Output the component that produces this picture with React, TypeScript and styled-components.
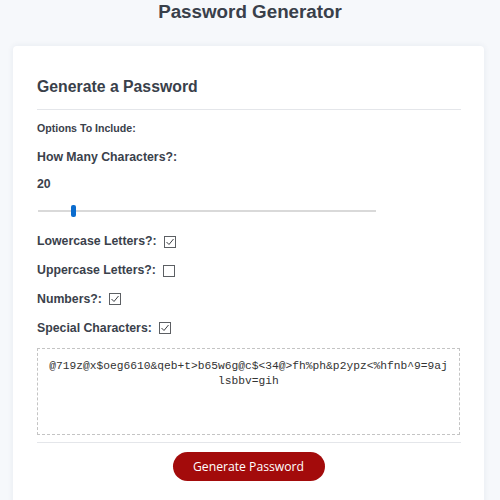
import React, { useState } from "react";
import styled, { createGlobalStyle } from "styled-components";

const GlobalStyle = createGlobalStyle`
  html, body { margin: 0; padding: 0; background: #f6f8fb; }
  body { font-family: "Liberation Sans", Arial, sans-serif; color: #3a414b; }
  * { box-sizing: border-box; }
`;

const Page = styled.div`
  width: 500px;
  min-height: 500px;
  overflow: hidden;
`;

const Title = styled.h1`
  margin: 0;
  height: 46px;
  padding-top: 0;
  font-size: 18.8px;
  line-height: 23px;
  font-weight: 700;
  text-align: center;
  color: #39404a;
`;

const Card = styled.section`
  margin-left: 13px;
  width: 471px;
  background: #fff;
  border-radius: 4px;
  box-shadow: 0 0 6px rgba(40, 60, 100, 0.08);
  padding: 0 23px 30px 24px;
`;

const CardHeader = styled.div`
  padding: 31px 0 13px;
  border-bottom: 1px solid #e4e6ea;
`;

const CardTitle = styled.h2`
  margin: 0;
  font-size: 15.8px;
  line-height: 19px;
  font-weight: 700;
  color: #39404a;
`;

const Body = styled.div`
  display: flex;
  flex-direction: column;
  padding-top: 12px;
`;

const Small = styled.div`
  font-size: 10.6px;
  line-height: 13px;
  font-weight: 700;
`;

const Label = styled.div<{ $mt: number }>`
  margin-top: ${(p) => p.$mt}px;
  font-size: 12.3px;
  line-height: 15px;
  font-weight: 700;
`;

const Range = styled.input`
  -webkit-appearance: none;
  appearance: none;
  margin: 10.5px 0 0 1px;
  width: 338px;
  height: 16px;
  background: transparent;
  &::-webkit-slider-runnable-track {
    height: 2px;
    background: #d9d9d9;
  }
  &::-webkit-slider-thumb {
    -webkit-appearance: none;
    width: 5px;
    height: 12px;
    margin-top: -5px;
    border-radius: 2px;
    background: #0b6cce;
  }
`;

const OptionRow = styled.label<{ $mt: number }>`
  display: flex;
  align-items: center;
  gap: 7px;
  margin-top: ${(p) => p.$mt}px;
  font-size: 12.3px;
  line-height: 15px;
  font-weight: 700;
  cursor: pointer;
`;

const Box = styled.span`
  display: inline-flex;
  width: 12px;
  height: 12px;
  border: 1px solid #5c5f63;
  background: #fff;
`;

const Output = styled.textarea`
  display: block;
  margin-top: 12.5px;
  width: 423px;
  height: 87px;
  padding: 10px 9.5px;
  border: 1px dashed #c4c4c4;
  resize: none;
  outline: none;
  font-family: "Liberation Mono", "Courier New", monospace;
  font-size: 11.25px;
  line-height: 15px;
  color: #333;
  text-align: center;
  background: #fff;
`;

const Footer = styled.div`
  margin-top: 7px;
  border-top: 1px solid #e4e6ea;
  padding-top: 9px;
  display: flex;
  justify-content: center;
`;

const GenButton = styled.button`
  width: 152px;
  height: 29px;
  border: none;
  border-radius: 15px;
  background: #a30b0b;
  color: #fff;
  font-family: "Open Sans", "Noto Sans", sans-serif;
  font-size: 12.2px;
  cursor: pointer;
  margin-right: 1px;
`;

const Check = ({ on }: { on: boolean }) => (
  <Box>
    {on && (
      <svg width="10" height="10" viewBox="0 0 10 10">
        <path d="M1.5 5 L4 7.5 L8.5 2" fill="none" stroke="#3c3f44" strokeWidth="1" />
      </svg>
    )}
  </Box>
);

const password = "@719z@x$oeg6610&qeb+t>b65w6g@c$<34@>fh%ph&p2ypz<%hfnb^9=9ajlsbbv=gih";

export default function App() {
  const [len, setLen] = useState(20);
  const [opts, setOpts] = useState({ lower: true, upper: false, num: true, special: true });
  const toggle = (k: keyof typeof opts) => setOpts((o) => ({ ...o, [k]: !o[k] }));
  return (
    <Page>
      <GlobalStyle />
      <Title>Password Generator</Title>
      <Card>
        <CardHeader>
          <CardTitle>Generate a Password</CardTitle>
        </CardHeader>
        <Body>
          <Small>Options To Include:</Small>
          <Label $mt={15}>How Many Characters?:</Label>
          <Label $mt={12}>{len}</Label>
          <Range type="range" min={8} max={128} value={len} onChange={(e) => setLen(Number(e.target.value))} />
          <OptionRow $mt={15.5} onClick={() => toggle("lower")}>
            Lowercase Letters?: <Check on={opts.lower} />
          </OptionRow>
          <OptionRow $mt={14} onClick={() => toggle("upper")}>
            Uppercase Letters?: <Check on={opts.upper} />
          </OptionRow>
          <OptionRow $mt={13.5} onClick={() => toggle("num")}>
            Numbers?: <Check on={opts.num} />
          </OptionRow>
          <OptionRow $mt={14} onClick={() => toggle("special")}>
            Special Characters: <Check on={opts.special} />
          </OptionRow>
          <Output readOnly value={password} />
        </Body>
        <Footer>
          <GenButton>Generate Password</GenButton>
        </Footer>
      </Card>
    </Page>
  );
}
